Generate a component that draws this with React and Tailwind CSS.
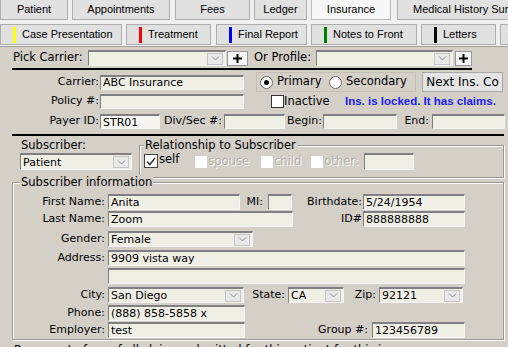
import React from "react";

function Field({ w, h = "h-[16px]", children, bg = "bg-[#f0efe6]" }) {
  return (
    <div
      className={`${w} ${h} ${bg} flex items-center shrink-0 overflow-hidden whitespace-nowrap pl-[2px] border-t-2 border-l border-r border-b border-t-[#808080] border-l-[#808080] border-r-[#f6f6f6] border-b-[#f6f6f6] leading-none`}
    >
      {children}
    </div>
  );
}

function Arrow() {
  return (
    <div className="ml-auto mr-[2px] w-[16px] h-[12px] shrink-0 bg-[#e9e9e9] border border-[#c4c4c4] flex items-center justify-center">
      <svg width="9" height="5" viewBox="0 0 9 5">
        <path d="M1 0.5 L4.5 4 L8 0.5" fill="none" stroke="#8a8a8a" strokeWidth="1" />
      </svg>
    </div>
  );
}

function Combo({ w, h = "h-[16px]", children }) {
  return (
    <div
      className={`${w} ${h} bg-[#f0efe6] flex items-center shrink-0 overflow-hidden whitespace-nowrap pl-[2px] border-t-2 border-l border-r border-b border-t-[#808080] border-l-[#808080] border-r-[#f6f6f6] border-b-[#f6f6f6] leading-none`}
    >
      <span>{children}</span>
      <Arrow />
    </div>
  );
}

function Plus({ w, ml }) {
  return (
    <div className={`${w} ${ml} h-[15px] shrink-0 bg-[#f6f6f6] border border-[#9a9a9a] flex items-center justify-center`}>
      <svg width="9" height="9" viewBox="0 0 9 9">
        <path d="M4.5 0 V9 M0 4.5 H9" stroke="#000" strokeWidth="2" />
      </svg>
    </div>
  );
}

function Label({ w, children, cls = "" }) {
  return <div className={`${w} shrink-0 text-right whitespace-nowrap ${cls}`}>{children}</div>;
}

function Tab({ w, ml = "", children, selected = false }) {
  return (
    <div
      className={`${w} ${ml} h-[20px] shrink-0 flex items-center justify-center border-l border-r border-b whitespace-nowrap overflow-hidden ${
        selected
          ? "bg-[#f7f7f7] border-[#b9b9b9] bg-[radial-gradient(#e4e4e4_0.6px,transparent_0.7px)] bg-[length:2px_2px]"
          : "bg-[#e1e1e1] border-[#adadad]"
      }`}
    >
      {children}
    </div>
  );
}

function Btn({ w, ml = "", bar, children }) {
  return (
    <div className={`${w} ${ml} h-[21px] shrink-0 flex items-center border border-[#adadad] bg-[#e1e1e1] whitespace-nowrap overflow-hidden`}>
      {bar && <div className={`ml-[12px] w-[3px] h-[16px] shrink-0 ${bar}`} />}
      <span className="ml-[6px]">{children}</span>
    </div>
  );
}

function DisabledCheck({ ml, children }) {
  return (
    <div className={`flex items-center ${ml}`}>
      <div className="w-[12px] h-[12px] bg-white shrink-0" />
      <span className="ml-[1px] text-[#b4b0a8] [text-shadow:1px_1px_0_#ffffff]">{children}</span>
    </div>
  );
}

export default function App() {
  return (
    <div className="w-[508px] h-[347px] overflow-hidden bg-[#d4d0c8] text-black">
      {/* header tabs */}
      <div className="h-[47px] bg-[#f0f0f0] border-b border-[#a0a0a0] font-['Liberation_Sans',sans-serif] text-[11px] overflow-hidden">
        <div className="flex h-[20px]">
          <Tab w="w-[68px]">Patient</Tab>
          <Tab w="w-[98px]" ml="ml-[4px]">Appointments</Tab>
          <Tab w="w-[75px]" ml="ml-[5px]">Fees</Tab>
          <Tab w="w-[53px]" ml="ml-[4px]">Ledger</Tab>
          <Tab w="w-[80px]" ml="ml-[4px]" selected>
            Insurance
          </Tab>
          <Tab w="w-[130px]" ml="ml-[6px]">
            <span className="w-full pl-[15px] text-left">Medical History Summary</span>
          </Tab>
        </div>
        <div className="flex mt-[4px] h-[21px]">
          <Btn w="w-[122px]" bar="bg-[#ffff00]">Case Presentation</Btn>
          <Btn w="w-[85px]" ml="ml-[4px]" bar="bg-[#ff0000]">Treatment</Btn>
          <Btn w="w-[91px]" ml="ml-[5px]" bar="bg-[#0000ff]">Final Report</Btn>
          <Btn w="w-[106px]" ml="ml-[4px]" bar="bg-[#008000]">Notes to Front</Btn>
          <Btn w="w-[75px]" ml="ml-[4px]" bar="bg-[#000000]">Letters</Btn>
          <Btn w="w-[40px]" ml="ml-[4px]"></Btn>
        </div>
      </div>

      {/* content */}
      <div className="flex flex-col font-['DejaVu_Sans',sans-serif] text-[11px]">
        {/* Pick carrier */}
        <div className="flex items-center h-[16px] mt-[3px]">
          <div className="ml-[13px] w-[75px] shrink-0 whitespace-nowrap text-[11.5px]">Pick Carrier:</div>
          <Combo w="w-[138px]"></Combo>
          <Plus w="w-[21px]" ml="ml-[1px]" />
          <div className="ml-[6px] w-[62px] shrink-0 whitespace-nowrap text-[11.5px]">Or Profile:</div>
          <Combo w="w-[137px]"></Combo>
          <Plus w="w-[17px]" ml="ml-[2px]" />
        </div>
        <div className="ml-[12px] mt-[2px] w-[460px] h-[2px] bg-black" />

        {/* Carrier */}
        <div className="flex items-center h-[20px] mt-[2px]">
          <Label w="w-[100px]" cls="pr-[1px]">Carrier:</Label>
          <Field w="w-[144px]" h="h-[15px]">ABC Insurance</Field>
          <div className="ml-[12px] w-[160px] h-[20px] shrink-0 border border-[#c4c0b8] flex items-center text-[11.5px]">
            <div className="w-[72px] pl-[3px] flex items-center shrink-0">
              <div className="w-[13px] h-[13px] rounded-full bg-white border border-[#6a6a6a] flex items-center justify-center shrink-0">
                <div className="w-[5px] h-[5px] rounded-full bg-black" />
              </div>
              <span className="ml-[4px]">Primary</span>
            </div>
            <div className="flex items-center">
              <div className="w-[13px] h-[13px] rounded-full bg-white border border-[#6a6a6a] shrink-0" />
              <span className="ml-[4px]">Secondary</span>
            </div>
          </div>
          <div className="ml-[6px] w-[81px] h-[20px] shrink-0 border border-[#a8a8a8] bg-[#e4e4e4] flex items-center justify-center text-[12px] whitespace-nowrap">
            Next Ins. Co
          </div>
        </div>

        {/* Policy */}
        <div className="flex items-center h-[15px] mt-[2px]">
          <Label w="w-[100px]" cls="pr-[1px]">Policy #:</Label>
          <Field w="w-[144px]" h="h-[15px]"></Field>
          <div className="ml-[27px] w-[13px] h-[13px] bg-white border border-[#333] shrink-0" />
          <span className="w-[61px] shrink-0 text-[11.5px]">Inactive</span>
          <span className="font-['Liberation_Sans',sans-serif] font-bold text-[11.5px] text-[#1c1cf5] whitespace-nowrap">
            Ins. is locked. It has claims.
          </span>
        </div>

        {/* Payer ID */}
        <div className="flex items-center h-[15px] mt-[5px]">
          <Label w="w-[100px]" cls="pr-[1px]">Payer ID:</Label>
          <Field w="w-[60px]" h="h-[15px]" bg="bg-[#f6f5f0]">STR01</Field>
          <Label w="w-[64px]" cls="pr-[2px]">Div/Sec #:</Label>
          <Field w="w-[61px]" h="h-[15px]"></Field>
          <Label w="w-[38px]" cls="pr-[1px]">Begin:</Label>
          <Field w="w-[74px]" h="h-[15px]"></Field>
          <Label w="w-[35px]" cls="pr-[3px]">End:</Label>
          <Field w="w-[73px]" h="h-[15px]"></Field>
        </div>
        <div className="ml-[12px] mt-[5px] w-[492px] h-[2px] bg-black" />

        {/* Subscriber + relationship */}
        <div className="flex">
          <div className="ml-[20px] w-[112px] flex flex-col shrink-0">
            <div className="h-[14px] mt-[2px] pl-[1px] leading-[14px] text-[11.5px]">Subscriber:</div>
            <div className="mt-[1px]">
              <Combo w="w-[112px]" h="h-[17px]">Patient</Combo>
            </div>
          </div>
          <div className="ml-[7px] mt-[9px] w-[365px] h-[33px] shrink-0 border border-[#9c9890] shadow-[inset_1px_1px_0_#ffffff,1px_1px_0_#ffffff] flex flex-col">
            <div className="-mt-[8px] ml-[4px] self-start px-[1px] bg-[#d4d0c8] h-[14px] leading-[14px] text-[11.5px] whitespace-nowrap">
              Relationship to Subscriber
            </div>
            <div className="flex items-center mt-[1px] pl-[4px] text-[11.5px]">
              <div className="w-[14px] h-[14px] bg-white border border-[#444] shrink-0 flex items-center justify-center -mt-[1px]">
                <svg width="10" height="9" viewBox="0 0 10 9">
                  <path d="M1 4.5 L3.8 7.5 L9 1" fill="none" stroke="#333" strokeWidth="1.5" />
                </svg>
              </div>
              <span className="ml-[1px] -mt-[4px]">self</span>
              <DisabledCheck ml="ml-[16px]">spouse</DisabledCheck>
              <DisabledCheck ml="ml-[12px]">child</DisabledCheck>
              <DisabledCheck ml="ml-[10px]">other:</DisabledCheck>
              <div className="ml-[5px]">
                <Field w="w-[50px]" h="h-[17px]"></Field>
              </div>
            </div>
          </div>
        </div>

        {/* Subscriber information */}
        <div className="ml-[12px] mt-[4px] w-[492px] h-[158px] shrink-0 border border-[#9c9890] shadow-[inset_1px_1px_0_#ffffff,1px_1px_0_#ffffff] flex flex-col">
          <div className="-mt-[8px] ml-[7px] self-start px-[1px] bg-[#d4d0c8] h-[15px] leading-[15px] text-[11.5px] whitespace-nowrap">
            Subscriber information
          </div>

          <div className="flex items-center h-[16px] mt-[4px]">
            <Label w="w-[95px]" cls="pr-[3px]">First Name:</Label>
            <Field w="w-[132px]">Anita</Field>
            <Label w="w-[28px]" cls="pr-[5px]">MI:</Label>
            <Field w="w-[24px]"></Field>
            <Label w="w-[71px]" cls="pr-[1px]">Birthdate:</Label>
            <Field w="w-[102px]">5/24/1954</Field>
          </div>

          <div className="flex items-center h-[16px] mt-[1px]">
            <Label w="w-[95px]" cls="pr-[3px]">Last Name:</Label>
            <Field w="w-[185px]">Zoom</Field>
            <Label w="w-[70px]" cls="pr-[1px]">ID#</Label>
            <Field w="w-[102px]">888888888</Field>
          </div>

          <div className="flex items-center h-[16px] mt-[4px]">
            <Label w="w-[95px]" cls="pr-[3px]">Gender:</Label>
            <Combo w="w-[145px]">Female</Combo>
          </div>

          <div className="flex items-center h-[16px] mt-[3px]">
            <Label w="w-[95px]" cls="pr-[3px]">Address:</Label>
            <Field w="w-[357px]">9909 vista way</Field>
          </div>

          <div className="flex items-center h-[16px] mt-[2px]">
            <Label w="w-[95px]" cls="pr-[3px]"></Label>
            <Field w="w-[357px]"></Field>
          </div>

          <div className="flex items-center h-[16px] mt-[3px]">
            <Label w="w-[95px]" cls="pr-[3px]">City:</Label>
            <Combo w="w-[136px]">San Diego</Combo>
            <Label w="w-[44px]" cls="pr-[3px]">State:</Label>
            <Combo w="w-[56px]">CA</Combo>
            <Label w="w-[35px]" cls="pr-[3px]">Zip:</Label>
            <Combo w="w-[84px]">92121</Combo>
          </div>

          <div className="flex items-center h-[16px] mt-[2px]">
            <Label w="w-[95px]" cls="pr-[3px]">Phone:</Label>
            <Field w="w-[137px]">(888) 858-5858 x</Field>
          </div>

          <div className="flex items-center h-[16px] mt-[1px]">
            <Label w="w-[95px]" cls="pr-[3px]">Employer:</Label>
            <Field w="w-[137px]">test</Field>
            <Label w="w-[127px]" cls="pr-[4px]">Group #:</Label>
            <Field w="w-[93px]">123456789</Field>
          </div>
        </div>

        <div className="ml-[14px] mt-[3px] h-[14px] leading-[14px] whitespace-nowrap text-[11.5px]">
          Recompute fees of all claims submitted for this patient for this insurance
        </div>
      </div>
    </div>
  );
}
